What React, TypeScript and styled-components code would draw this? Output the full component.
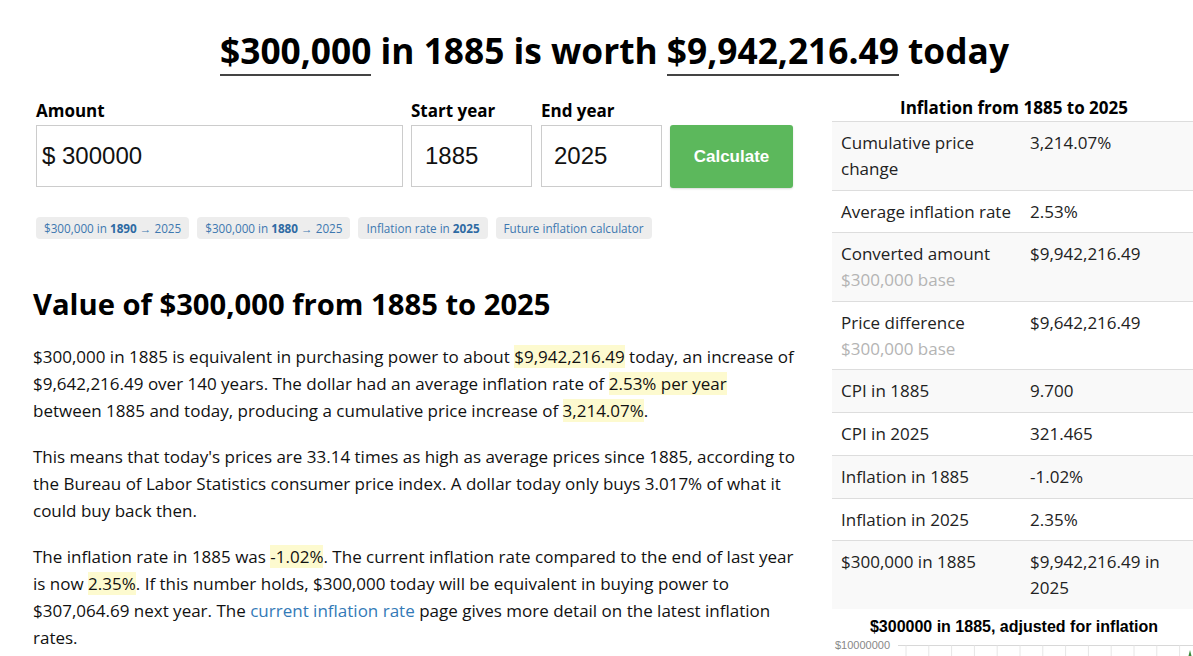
import React from "react";
import styled, { createGlobalStyle } from "styled-components";

const GlobalStyle = createGlobalStyle`
  html, body { margin: 0; padding: 0; background: #fff; overflow-x: hidden; }
  body { font-family: "Open Sans", "Noto Sans", sans-serif; color: #111; }
  * { box-sizing: border-box; }
`;

const Page = styled.div`
  width: 1163px;
  margin-left: 33px;
`;

const Title = styled.h1`
  margin: 28px 0 0;
  text-align: center;
  font-size: 35.3px;
  line-height: 44px;
  font-weight: 700;
  color: #000;
`;

const Under = styled.span`
  border-bottom: 2.5px solid #444;
  padding-bottom: 0;
`;

const Columns = styled.div`
  display: grid;
  grid-template-columns: 764px 364px;
  column-gap: 35px;
  margin-top: 25px;
  align-items: start;
`;

const Left = styled.div`
  display: flex;
  flex-direction: column;
`;

const Form = styled.div`
  display: flex;
  align-items: flex-end;
  gap: 8px;
  padding-left: 3px;
`;

const Field = styled.label<{ $w: number }>`
  display: flex;
  flex-direction: column;
  width: ${(p) => p.$w}px;
  margin-right: ${(p) => (p.$w < 200 ? 1 : 0)}px;
`;

const FieldLabel = styled.span`
  font-weight: 700;
  font-size: 17px;
  line-height: 28px;
  color: #000;
`;

const InputBox = styled.div<{ $pad: number }>`
  height: 62px;
  border: 1px solid #ccc;
  display: flex;
  align-items: center;
  padding-left: ${(p) => p.$pad}px;
  font-family: "Liberation Sans", Arial, sans-serif;
  font-size: 24px;
  color: #111;
`;

const CalcButton = styled.button`
  width: 123px;
  height: 63px;
  border: none;
  border-radius: 3px;
  background: #5cb85c;
  color: #fff;
  font-family: "Liberation Sans", Arial, sans-serif;
  font-weight: 700;
  font-size: 17px;
  box-shadow: 0 1px 2px rgba(0, 0, 0, 0.15);
  padding: 0;
  margin-bottom: -1px;
  margin-left: -1px;
`;

const Pills = styled.div`
  display: flex;
  gap: 8px;
  margin-top: 30px;
  padding-left: 3px;
`;

const Pill = styled.span`
  display: inline-flex;
  align-items: center;
  height: 22px;
  padding: 0 8px;
  background: #ededed;
  border-radius: 4px;
  font-size: 11.7px;
  color: #3d78b0;
  white-space: nowrap;
  b { font-weight: 700; color: #2e6aa3; }
`;

const H2 = styled.h2`
  margin: 46px 0 0;
  font-size: 29.2px;
  line-height: 38px;
  font-weight: 700;
  color: #000;
`;

const P = styled.p`
  margin: 20px 0 0;
  font-size: 17px;
  line-height: 27px;
  color: #111;
  & + & { margin-top: 19px; }
`;

const Hl = styled.span`
  background: #fdfacf;
`;

const Link = styled.a`
  color: #337ab7;
  text-decoration: none;
`;

const Right = styled.div`
  display: flex;
  flex-direction: column;
`;

const TableTitle = styled.div`
  text-align: center;
  font-weight: 700;
  font-size: 17px;
  line-height: 24px;
  color: #000;
  margin-top: -1px;
  margin-bottom: 1px;
`;

const Table = styled.div`
  display: flex;
  flex-direction: column;
  border-top: 1px solid #ddd;
`;

const Row = styled.div<{ $odd: boolean }>`
  display: grid;
  grid-template-columns: 189px 1fr;
  background: ${(p) => (p.$odd ? "#f9f9f9" : "#fff")};
  border-bottom: 1px solid #ddd;
  padding: 8px 0;
  font-size: 17px;
  line-height: 25.75px;
  color: #222;
  &:last-child { border-bottom: none; }
`;

const Cell = styled.div`
  padding: 0 6px 0 9px;
`;

const Sub = styled.div`
  color: #b4b4b4;
`;

const ChartTitle = styled.div`
  margin-top: 9px;
  text-align: center;
  font-family: "Liberation Sans", Arial, sans-serif;
  font-weight: 700;
  font-size: 16px;
  line-height: 18px;
  color: #000;
`;

const ChartSvg = styled.svg`
  display: block;
  margin-top: 2px;
`;

const rows: { label: string; sub?: string; value: string }[] = [
  { label: "Cumulative price change", value: "3,214.07%" },
  { label: "Average inflation rate", value: "2.53%" },
  { label: "Converted amount", sub: "$300,000 base", value: "$9,942,216.49" },
  { label: "Price difference", sub: "$300,000 base", value: "$9,642,216.49" },
  { label: "CPI in 1885", value: "9.700" },
  { label: "CPI in 2025", value: "321.465" },
  { label: "Inflation in 1885", value: "-1.02%" },
  { label: "Inflation in 2025", value: "2.35%" },
  { label: "$300,000 in 1885", value: "$9,942,216.49 in 2025" },
];

const gridXs = Array.from({ length: 13 }, (_, i) => 74 + i * 22.8);

export default function App() {
  return (
    <>
      <GlobalStyle />
      <Page>
        <Title>
          <Under>$300,000</Under> in 1885 is worth <Under>$9,942,216.49</Under> today
        </Title>
        <Columns>
          <Left>
            <Form>
              <Field $w={367}>
                <FieldLabel>Amount</FieldLabel>
                <InputBox $pad={5}>$ 300000</InputBox>
              </Field>
              <Field $w={121}>
                <FieldLabel>Start year</FieldLabel>
                <InputBox $pad={13}>1885</InputBox>
              </Field>
              <Field $w={121}>
                <FieldLabel>End year</FieldLabel>
                <InputBox $pad={12}>2025</InputBox>
              </Field>
              <CalcButton>Calculate</CalcButton>
            </Form>
            <Pills>
              <Pill>$300,000 in&nbsp;<b>1890</b>&nbsp;→ 2025</Pill>
              <Pill>$300,000 in&nbsp;<b>1880</b>&nbsp;→ 2025</Pill>
              <Pill>Inflation rate in&nbsp;<b>2025</b></Pill>
              <Pill>Future inflation calculator</Pill>
            </Pills>
            <H2>Value of $300,000 from 1885 to 2025</H2>
            <P>
              $300,000 in 1885 is equivalent in purchasing power to about <Hl>$9,942,216.49</Hl> today, an increase of $9,642,216.49 over 140 years. The dollar had an average inflation rate of <Hl>2.53% per year</Hl> between 1885 and today, producing a cumulative price increase of <Hl>3,214.07%</Hl>.
            </P>
            <P>
              This means that today's prices are 33.14 times as high as average prices since 1885, according to the Bureau of Labor Statistics consumer price index. A dollar today only buys 3.017% of what it could buy back then.
            </P>
            <P>
              The inflation rate in 1885 was <Hl>-1.02%</Hl>. The current inflation rate compared to the end of last year is now <Hl>2.35%</Hl>. If this number holds, $300,000 today will be equivalent in buying power to $307,064.69 next year. The <Link href="#">current inflation rate</Link> page gives more detail on the latest inflation rates.
            </P>
          </Left>
          <Right>
            <TableTitle>Inflation from 1885 to 2025</TableTitle>
            <Table>
              {rows.map((r, i) => (
                <Row key={r.label} $odd={i % 2 === 0}>
                  <Cell>
                    {r.label}
                    {r.sub && <Sub>{r.sub}</Sub>}
                  </Cell>
                  <Cell>{r.value}</Cell>
                </Row>
              ))}
            </Table>
            <ChartTitle>$300000 in 1885, adjusted for inflation</ChartTitle>
            <ChartSvg width="364" height="40" viewBox="0 0 364 40">
              <text x="3" y="11" fontFamily="Liberation Sans, Arial, sans-serif" fontSize="11" fill="#888">
                $10000000
              </text>
              <line x1="66" y1="7.5" x2="364" y2="7.5" stroke="#d8d8d8" strokeWidth="1" />
              {gridXs.map((x) => (
                <line key={x} x1={x} y1="7.5" x2={x} y2="40" stroke="#e6e6e6" strokeWidth="1" />
              ))}
              <path d="M356 20 L358 12 L360 20 Z" fill="#3a8a3a" />
            </ChartSvg>
          </Right>
        </Columns>
      </Page>
    </>
  );
}
